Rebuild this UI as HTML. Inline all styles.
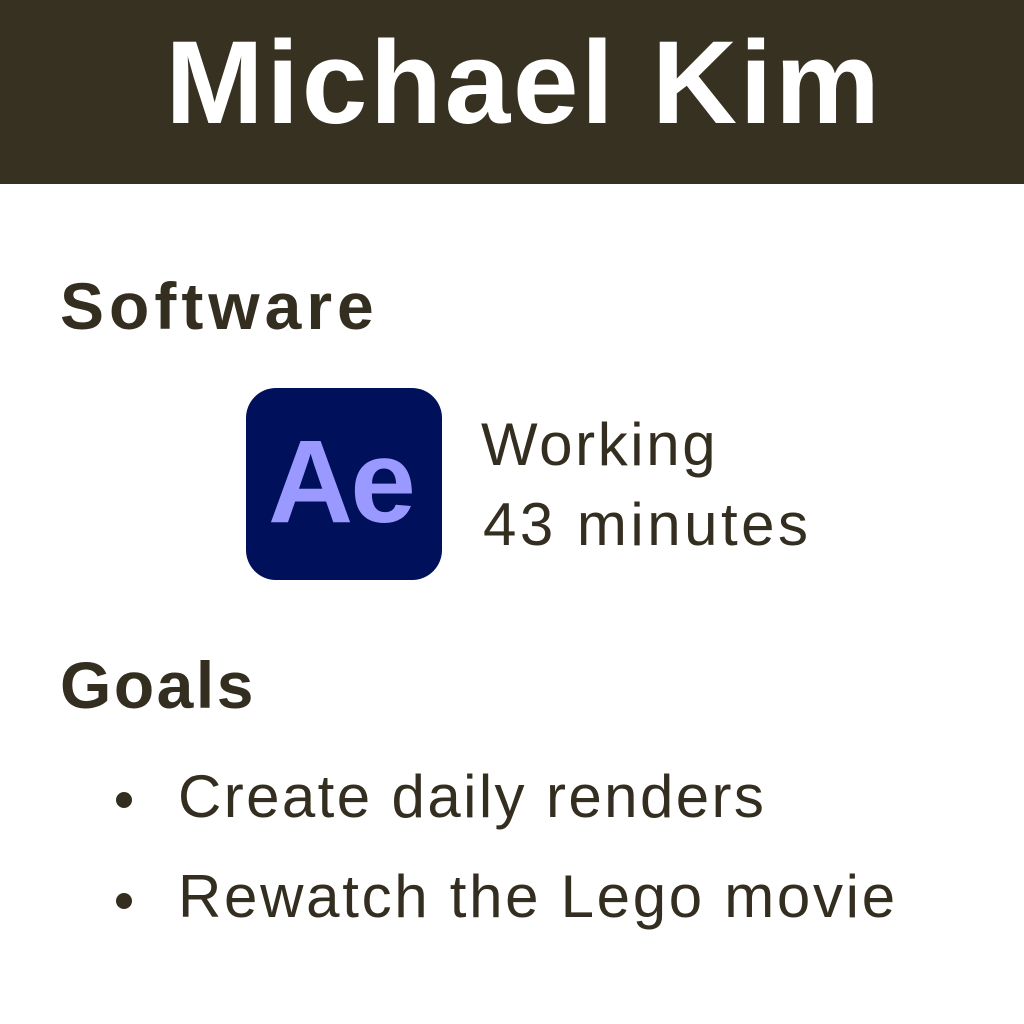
<!DOCTYPE html>
<html><head><style>
body{margin:0;width:1024px;height:1024px;background:#fff;position:relative;overflow:hidden;font-family:"Liberation Sans",sans-serif;color:#342e20}
.hdr{position:absolute;left:0;top:0;width:1024px;height:184px;background:#373122}
.t{position:absolute;white-space:nowrap;line-height:1}
.icon{position:absolute;left:246px;top:388px;width:196px;height:192px;border-radius:30px;background:#00105a}
.dot{position:absolute;width:16px;height:16px;border-radius:50%;background:#342e20}
</style></head><body>
<div class="hdr"></div>
<div class="t" style="left:12px;width:1024px;text-align:center;top:24px;font-size:118px;font-weight:bold;color:#fff;letter-spacing:2.6px">Michael Kim</div>
<div class="t" style="left:60px;top:273px;font-size:66px;font-weight:bold;letter-spacing:5px">Software</div>
<div class="icon"></div>
<div class="t" style="left:268px;top:423px;font-size:118px;font-weight:bold;color:#9a99ff;letter-spacing:-3px">Ae</div>
<div class="t" style="left:481px;top:415px;font-size:60px;letter-spacing:2.6px">Working</div>
<div class="t" style="left:483px;top:495px;font-size:60px;letter-spacing:3.5px">43 minutes</div>
<div class="t" style="left:60px;top:652px;font-size:66px;font-weight:bold;letter-spacing:2.5px">Goals</div>
<div class="dot" style="left:116px;top:792px"></div>
<div class="t" style="left:178px;top:767px;font-size:60px;letter-spacing:2.4px">Create daily renders</div>
<div class="dot" style="left:116px;top:893px"></div>
<div class="t" style="left:178px;top:867px;font-size:60px;letter-spacing:2.7px">Rewatch the Lego movie</div>
</body></html>
